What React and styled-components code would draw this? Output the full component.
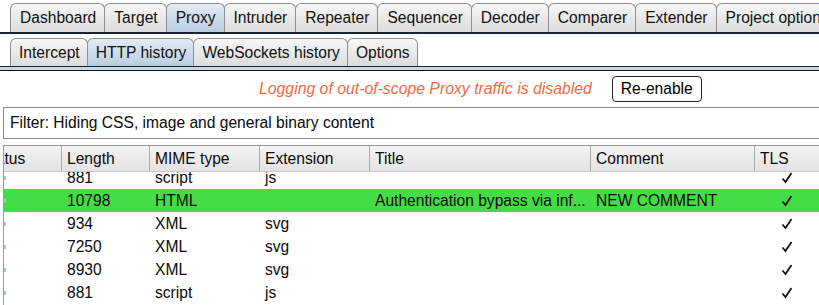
import React from "react";
import styled, { createGlobalStyle } from "styled-components";

const Global = createGlobalStyle`
  body {
    margin: 0;
    background: #ffffff;
    font-family: "Liberation Sans", Arial, sans-serif;
    font-size: 15.6px;
    color: #0a0a0a;
    overflow: hidden;
  }
`;

const Page = styled.div`
  width: 819px;
  height: 305px;
  overflow: hidden;
`;

const TabStrip = styled.div`
  display: flex;
  padding: ${(p) => (p.sub ? "4px" : "3px")} 0 0 10px;
  border-bottom: ${(p) => (p.sub ? "1px" : "2px")} solid #1d2233;
  white-space: nowrap;
`;

const Tab = styled.div`
  flex: none;
  height: ${(p) => (p.sub ? "28px" : "29px")};
  box-sizing: border-box;
  padding: ${(p) => (p.sub ? "0 7px 0 8px" : "0 8px 0 9px")};
  margin-right: -1px;
  display: flex;
  align-items: center;
  border: 1px solid #8b8f96;
  border-bottom: none;
  border-radius: 6px 6px 0 0;
  background: ${(p) =>
    p.active
      ? "linear-gradient(#e4ecf4, #b9cde0)"
      : "linear-gradient(#f7f7f7, #dcdcdc)"};
  font-size: 15.6px;
  color: #111;
`;

const SubBand = styled.div`
  height: 3px;
  background: #c9d9e8;
  border-bottom: 1px solid #111;
`;

const Content = styled.div`
  padding-left: 3px;
`;

const MessageRow = styled.div`
  display: flex;
  align-items: center;
  gap: 20px;
  height: 36px;
  padding-left: 256px;
`;

const Warning = styled.span`
  font-style: italic;
  color: #f06a45;
  font-size: 15.8px;
`;

const Button = styled.button`
  height: 26px;
  padding: 0 8px;
  border: 1px solid #222;
  border-radius: 4px;
  background: #fff;
  font-family: "Liberation Sans", Arial, sans-serif;
  font-size: 15.6px;
  color: #000;
`;

const FilterBar = styled.div`
  height: 32px;
  box-sizing: border-box;
  border: 1px solid #8a8a8a;
  border-right: none;
  display: flex;
  align-items: center;
  padding-left: 6px;
  margin-bottom: 6px;
`;

const cols = "57px 88px 110px 110px 221px 164px 1fr";

const Table = styled.div`
  border-left: 1px solid #9a9a9a;
  border-top: 1px solid #9a9a9a;
`;

const HeaderRow = styled.div`
  display: grid;
  grid-template-columns: ${cols};
  height: 25px;
  background: linear-gradient(#f4f4f4, #e3e3e3);
  border-bottom: 1px solid #c8c8c8;
`;

const HeaderCell = styled.div`
  border-left: ${(p) => (p.first ? "none" : "1px solid #a8a8a8")};
  padding-left: ${(p) => (p.first ? "0" : "5px")};
  display: flex;
  align-items: center;
  overflow: hidden;
  white-space: nowrap;
`;

const Clipped = styled.span`
  margin-left: -23px;
`;

const Body = styled.div`
  height: 140px;
  overflow: hidden;
`;

const Rows = styled.div`
  margin-top: -6px;
`;

const Row = styled.div`
  display: grid;
  grid-template-columns: ${cols};
  height: 23px;
  align-items: center;
  background: ${(p) => (p.highlight ? "#45dd45" : "#ffffff")};
`;

const Cell = styled.div`
  padding-left: ${(p) => (p.edge ? "0" : "6px")};
  white-space: nowrap;
  overflow: hidden;
`;

const Check = styled.svg`
  display: block;
  margin-left: 27px;
`;

const Dot = styled.span`
  display: block;
  width: 2px;
  height: 4px;
  background: #9fc8e8;
`;

const topTabs = [
  "Dashboard",
  "Target",
  "Proxy",
  "Intruder",
  "Repeater",
  "Sequencer",
  "Decoder",
  "Comparer",
  "Extender",
  "Project options",
];

const subTabs = ["Intercept", "HTTP history", "WebSockets history", "Options"];

const rows = [
  { len: "881", mime: "script", ext: "js" },
  {
    len: "10798",
    mime: "HTML",
    ext: "",
    title: "Authentication bypass via inf...",
    comment: "NEW COMMENT",
    highlight: true,
  },
  { len: "934", mime: "XML", ext: "svg" },
  { len: "7250", mime: "XML", ext: "svg" },
  { len: "8930", mime: "XML", ext: "svg" },
  { len: "881", mime: "script", ext: "js" },
];

export default function App() {
  return (
    <Page>
      <Global />
      <TabStrip>
        {topTabs.map((t) => (
          <Tab key={t} active={t === "Proxy"}>
            {t}
          </Tab>
        ))}
      </TabStrip>
      <TabStrip sub>
        {subTabs.map((t) => (
          <Tab key={t} sub active={t === "HTTP history"}>
            {t}
          </Tab>
        ))}
      </TabStrip>
      <SubBand />
      <Content>
        <MessageRow>
          <Warning>Logging of out-of-scope Proxy traffic is disabled</Warning>
          <Button>Re-enable</Button>
        </MessageRow>
        <FilterBar>Filter: Hiding CSS, image and general binary content</FilterBar>
        <Table>
          <HeaderRow>
            <HeaderCell first>
              <Clipped>Status</Clipped>
            </HeaderCell>
            <HeaderCell>Length</HeaderCell>
            <HeaderCell>MIME type</HeaderCell>
            <HeaderCell>Extension</HeaderCell>
            <HeaderCell>Title</HeaderCell>
            <HeaderCell>Comment</HeaderCell>
            <HeaderCell>TLS</HeaderCell>
          </HeaderRow>
          <Body>
            <Rows>
              {rows.map((r, i) => (
                <Row key={i} highlight={r.highlight}>
                  <Cell edge>
                    <Dot />
                  </Cell>
                  <Cell>{r.len}</Cell>
                  <Cell>{r.mime}</Cell>
                  <Cell>{r.ext}</Cell>
                  <Cell>{r.title}</Cell>
                  <Cell>{r.comment}</Cell>
                  <Cell edge>
                    <Check width="12" height="12" viewBox="0 0 12 12">
                      <path
                        d="M1.5 6.5 L4.5 10 L10.5 1"
                        fill="none"
                        stroke="#111"
                        strokeWidth="1.8"
                      />
                    </Check>
                  </Cell>
                </Row>
              ))}
            </Rows>
          </Body>
        </Table>
      </Content>
    </Page>
  );
}
